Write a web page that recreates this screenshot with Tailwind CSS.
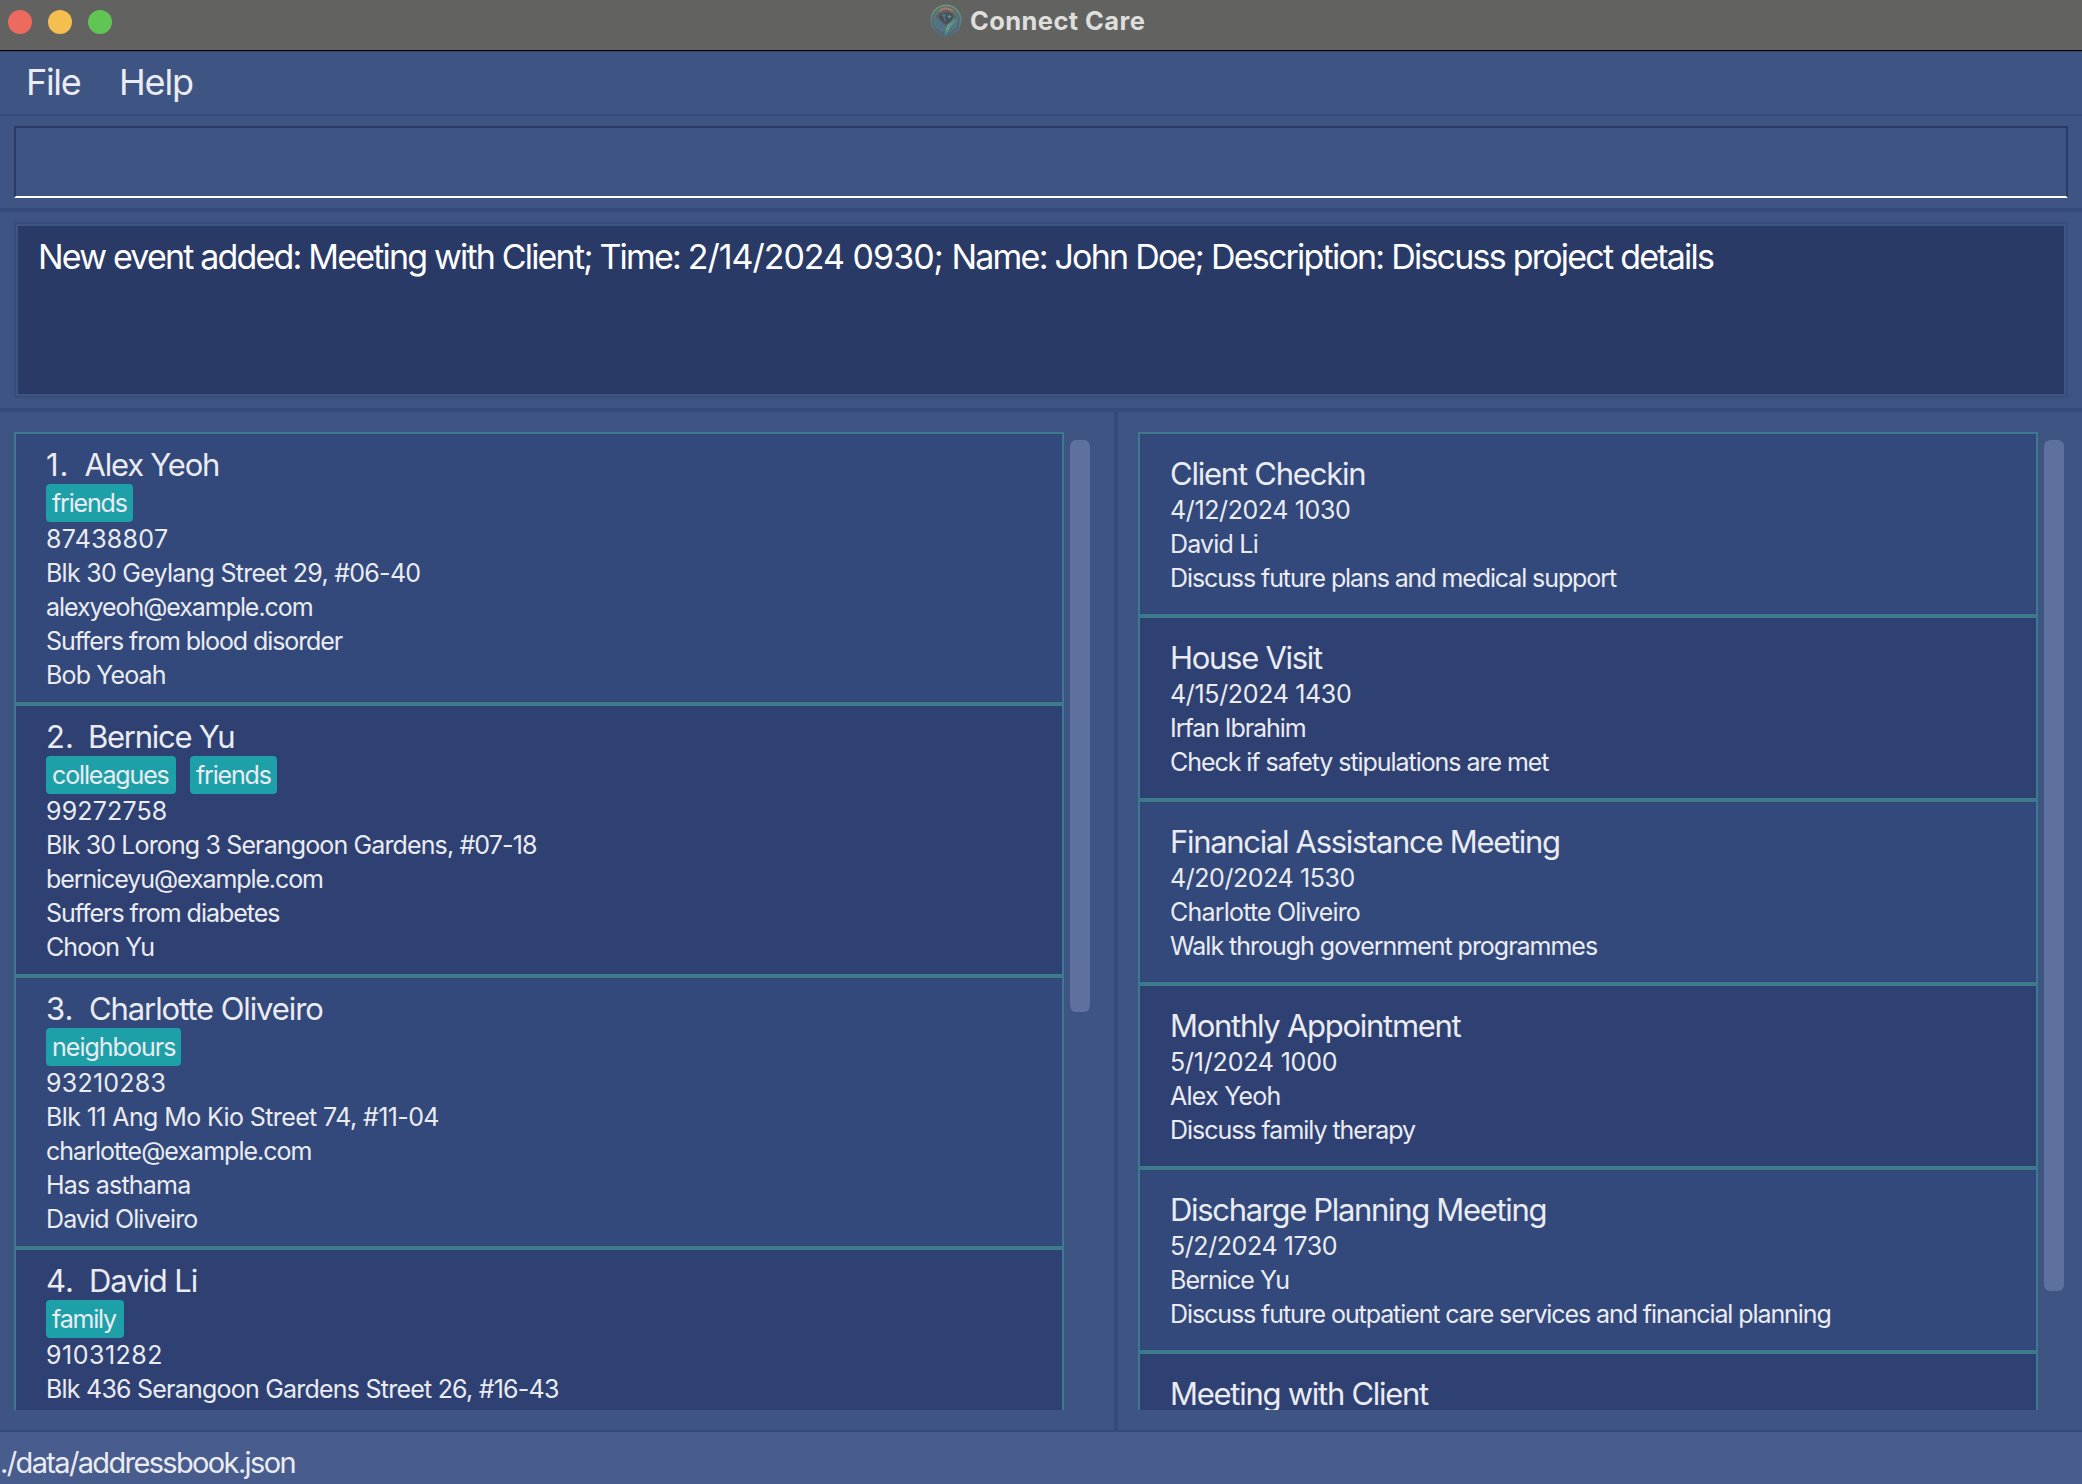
<!DOCTYPE html>
<html lang="en">
<head>
<meta charset="utf-8">
<title>Connect Care</title>
<script src="https://cdn.jsdelivr.net/npm/@tailwindcss/browser@4"></script>
</head>
<body class="flex h-[1484px] w-[2082px] flex-col overflow-hidden bg-[#3e5483] font-['Inter',sans-serif] whitespace-nowrap text-[#eaecf2]">

<header class="relative flex h-[52px] shrink-0 border-b border-[#34466d] bg-[#626260]">
  <div class="absolute inset-x-0 bottom-0 h-px bg-black"></div>
  <div class="absolute top-[10px] left-2 flex gap-4">
    <span class="size-6 rounded-full bg-[#ed6a5e]"></span>
    <span class="size-6 rounded-full bg-[#f5bf4f]"></span>
    <span class="size-6 rounded-full bg-[#61c554]"></span>
  </div>
  <div class="mt-1 ml-[930px] flex h-8 gap-2">
    <svg class="size-8" viewBox="0 0 32 32" fill="none" stroke-linecap="round">
      <defs>
        <linearGradient id="ring" x1="0" y1="0" x2="0" y2="1"><stop offset="0" stop-color="#6a9782"/><stop offset=".5" stop-color="#55868c"/><stop offset="1" stop-color="#486b8a"/></linearGradient>
        <linearGradient id="arm" x1="0" y1="0" x2="0" y2="1"><stop offset="0" stop-color="#548a8c"/><stop offset=".6" stop-color="#65a583"/><stop offset="1" stop-color="#4c7c8a"/></linearGradient>
      </defs>
      <circle cx="16" cy="16" r="14.600" stroke="url(#ring)" stroke-width="1.800"/>
      <path d="M8.500 7a12 12 0 0 0 4 20M23.500 7a12 12 0 0 1-4 20" stroke="#50808c" stroke-width="1.700"/>
      <path d="M6.500 15.500c.5 6 4 8.500 8 10.500M25.500 15.500c-.5 6-4 8.500-7 9.500" stroke="#4b7c94" stroke-width="1.700"/>
      <path d="M10 6.400c3.500-2.400 8.500-2.400 12 0" stroke="#9a7b6b" stroke-width="2.600"/>
      <path d="M9 12.500c0-3 3-4 7-4s7 1 7 4c0 4-4 5.500-7 8-3-2.500-7-4-7-8z" fill="#4a5055"/>
      <path d="M14 9.800v3.600M12.200 11.600h3.600M15 14.800v2" stroke="#4a7595" stroke-width="1.500"/>
      <path d="M19.500 11.400v2.400M18.300 12.600h2.400" stroke="#5a9a98" stroke-width="1.400"/>
      <path d="M8.500 16c1 4.500 5.500 5 7 9" stroke="#47769a" stroke-width="2.200"/>
      <path d="M24 16.500c-1 3.500-5.500 3.500-6.500 8-.3 2-.6 3.500-1.500 5.500" stroke="url(#arm)" stroke-width="3.200"/>
    </svg>
    <h1 class="mt-px text-[25.500px] leading-8 font-bold tracking-[0.400px] text-[#dededd]">Connect Care</h1>
  </div>
</header>

<nav class="flex h-16 shrink-0 border-b-2 border-[#364b7b] pt-2 pl-[26px] text-[36px] leading-[44px]">
  <span class="w-[93px] tracking-[-1.330px]">File</span>
  <span class="tracking-[-1.150px]">Help</span>
</nav>

<section class="h-24 shrink-0 border-b-4 border-[#364b7b] px-[14px] pt-[10px]">
  <div class="h-[72px] border-2 border-[#2a3b68] border-b-white"></div>
</section>

<section class="h-[200px] shrink-0 border-b-4 border-[#364b7b] px-[14px] pt-[10px]">
  <div class="h-[176px] border-2 border-[#384d7d] p-[2px]">
    <div class="h-full bg-[#293a66] pt-[11px] pl-5 text-[34px] leading-10 tracking-[-1.815px] text-white">New event added: Meeting with Client; Time: <span class="tracking-[-1px]">2/14/2024 0930; </span><span class="tracking-[-1.770px]">Name: John Doe; Description: Discuss project details</span></div>
  </div>
</section>

<main class="flex h-[1018px] shrink-0">
  <section class="flex w-[1118px] border-r-4 border-[#364b7b] pt-5 pb-5 pl-[14px]">
    <ul class="w-[1050px] overflow-hidden text-[25px] leading-[34px]">
      <li class="h-[272px] border-2 border-[#3d7a8e] bg-[#33497b] pt-3 pl-[30px]">
        <h2 class="flex text-[31px] leading-[38px]"><span class="w-[38.500px] tracking-[0.800px]">1.</span><span class="tracking-[-1.210px]">Alex Yeoh</span></h2>
        <div class="flex gap-[14px] leading-[38px]"><span class="w-[87px] rounded bg-[#1ea0a8] pl-[6px] tracking-[-1.180px]">friends</span></div>
        <p class="tracking-[0.280px]">87438807</p>
        <p class="tracking-[-0.740px]">Blk 30 Geylang Street 29, #06-40</p>
        <p class="tracking-[-1.060px]">alexyeoh@example.com</p>
        <p class="tracking-[-1.090px]">Suffers from blood disorder</p>
        <p class="tracking-[-0.860px]">Bob Yeoah</p>
      </li>
      <li class="h-[272px] border-2 border-[#3d7a8e] bg-[#2f4173] pt-3 pl-[30px]">
        <h2 class="flex text-[31px] leading-[38px]"><span class="w-[42px]">2.</span><span class="tracking-[-1.270px]">Bernice Yu</span></h2>
        <div class="flex gap-[14px] leading-[38px]"><span class="w-[130px] rounded bg-[#1ea0a8] pl-[6px] tracking-[-1.150px]">colleagues</span><span class="w-[87px] rounded bg-[#1ea0a8] pl-[6px] tracking-[-1.180px]">friends</span></div>
        <p class="tracking-[0.160px]">99272758</p>
        <p class="tracking-[-0.870px]">Blk 30 Lorong 3 Serangoon Gardens, #07-18</p>
        <p class="tracking-[-1.090px]">berniceyu@example.com</p>
        <p class="tracking-[-1.030px]">Suffers from diabetes</p>
        <p class="tracking-[-0.950px]">Choon Yu</p>
      </li>
      <li class="h-[272px] border-2 border-[#3d7a8e] bg-[#33497b] pt-3 pl-[30px]">
        <h2 class="flex text-[31px] leading-[38px]"><span class="w-[43px]">3.</span><span class="tracking-[-1.100px]">Charlotte Oliveiro</span></h2>
        <div class="flex gap-[14px] leading-[38px]"><span class="w-[135px] rounded bg-[#1ea0a8] pl-[6px] tracking-[-0.980px]">neighbours</span></div>
        <p class="tracking-[0.240px]">93210283</p>
        <p class="tracking-[-0.610px]">Blk 11 Ang Mo Kio Street 74, #11-04</p>
        <p class="tracking-[-0.980px]">charlotte@example.com</p>
        <p class="tracking-[-0.780px]">Has asthama</p>
        <p class="tracking-[-0.870px]">David Oliveiro</p>
      </li>
      <li class="h-[272px] border-2 border-[#3d7a8e] bg-[#2f4173] pt-3 pl-[30px]">
        <h2 class="flex text-[31px] leading-[38px]"><span class="w-[43px]">4.</span><span class="tracking-[-1.100px]">David Li</span></h2>
        <div class="flex gap-[14px] leading-[38px]"><span class="w-[78px] rounded bg-[#1ea0a8] pl-[6px] tracking-[-1.210px]">family</span></div>
        <p class="tracking-[0.500px]">91031282</p>
        <p class="tracking-[-0.780px]">Blk 436 Serangoon Gardens Street 26, #16-43</p>
      </li>
    </ul>
    <div class="mt-2 ml-[6px] h-[572px] w-5 rounded-md bg-[#5e709e]"></div>
  </section>

  <section class="flex flex-1 pt-5 pb-5 pl-5">
    <ul class="w-[900px] overflow-hidden text-[25px] leading-[34px]">
      <li class="h-[184px] border-2 border-[#3d7a8e] bg-[#33497b] pt-[21px] pl-[30px]">
        <h2 class="text-[31px] leading-[38px] tracking-[-1.230px]">Client Checkin</h2>
        <p class="tracking-[-0.390px]">4/12/2024 1030</p>
        <p class="tracking-[-0.800px]">David Li</p>
        <p class="tracking-[-1.100px]">Discuss future plans and medical support</p>
      </li>
      <li class="h-[184px] border-2 border-[#3d7a8e] bg-[#2f4173] pt-[21px] pl-[30px]">
        <h2 class="text-[31px] leading-[38px] tracking-[-1.280px]">House Visit</h2>
        <p class="tracking-[-0.340px]">4/15/2024 1430</p>
        <p class="tracking-[-1.070px]">Irfan Ibrahim</p>
        <p class="tracking-[-1.050px]">Check if safety stipulations are met</p>
      </li>
      <li class="h-[184px] border-2 border-[#3d7a8e] bg-[#33497b] pt-[21px] pl-[30px]">
        <h2 class="text-[31px] leading-[38px] tracking-[-1.310px]">Financial Assistance Meeting</h2>
        <p class="tracking-[-0.430px]">4/20/2024 1530</p>
        <p class="tracking-[-0.800px]">Charlotte Oliveiro</p>
        <p class="tracking-[-1.020px]">Walk through government programmes</p>
      </li>
      <li class="h-[184px] border-2 border-[#3d7a8e] bg-[#2f4173] pt-[21px] pl-[30px]">
        <h2 class="text-[31px] leading-[38px] tracking-[-1.280px]">Monthly Appointment</h2>
        <p class="tracking-[-0.200px]">5/1/2024 1000</p>
        <p class="tracking-[-0.750px]">Alex Yeoh</p>
        <p class="tracking-[-1.030px]">Discuss family therapy</p>
      </li>
      <li class="h-[184px] border-2 border-[#3d7a8e] bg-[#33497b] pt-[21px] pl-[30px]">
        <h2 class="text-[31px] leading-[38px] tracking-[-1.330px]">Discharge Planning Meeting</h2>
        <p class="tracking-[-0.420px]">5/2/2024 1730</p>
        <p class="tracking-[-0.920px]">Bernice Yu</p>
        <p class="tracking-[-1.090px]">Discuss future outpatient care services and financial planning</p>
      </li>
      <li class="h-[184px] border-2 border-[#3d7a8e] bg-[#2f4173] pt-[21px] pl-[30px]">
        <h2 class="text-[31px] leading-[38px] tracking-[-1.270px]">Meeting with Client</h2>
      </li>
    </ul>
    <div class="mt-2 ml-[6px] h-[851px] w-5 rounded-md bg-[#5e709e]"></div>
  </section>
</main>

<footer class="flex-1 border-t-2 border-[#364b7b] bg-[#485d8e] pt-[13px] text-[29px] leading-9 tracking-[-1.640px]">./data/addressbook.json</footer>
</body>
</html>
